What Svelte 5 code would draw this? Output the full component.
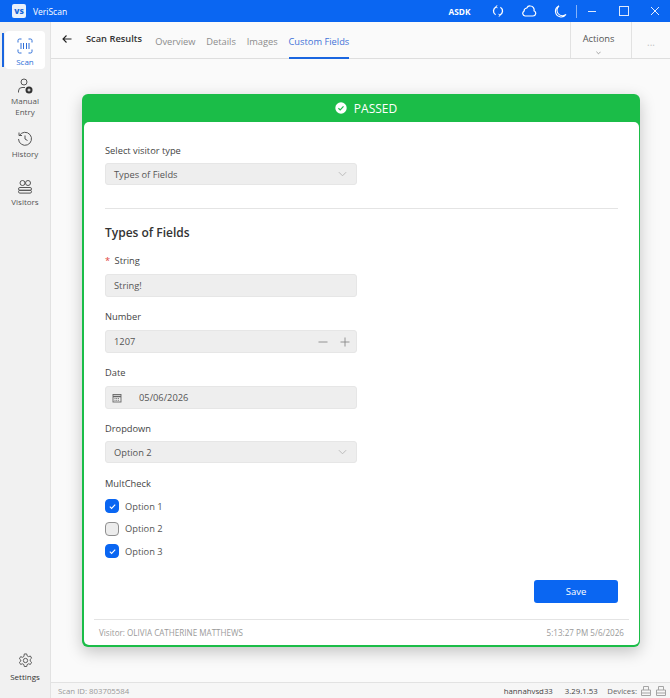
<script>
	const navItems = [
		{ id: 'scan', label: ['Scan'], active: true },
		{ id: 'manual', label: ['Manual', 'Entry'] },
		{ id: 'history', label: ['History'] },
		{ id: 'visitors', label: ['Visitors'] }
	];
	const tabs = ['Overview', 'Details', 'Images', 'Custom Fields'];
	const options = [
		{ label: 'Option 1', checked: true },
		{ label: 'Option 2', checked: false },
		{ label: 'Option 3', checked: true }
	];
</script>

{#snippet chevron()}
	<svg class="chevron" viewBox="0 0 10 6" width="9" height="6"><path d="M1 1l4 4 4-4" fill="none" stroke="#b5b5b5" stroke-width="1" /></svg>
{/snippet}

{#snippet printer()}
	<svg viewBox="0 0 12 12" width="12" height="12" fill="none" stroke="#a5a5a5" stroke-width="1"><path d="M3.5 5V1.5h5V5M1.5 5h9v5.5h-9zM1.5 8h9" /></svg>
{/snippet}

<div class="app">
	<header class="titlebar">
		<div class="logo">VS</div>
		<span class="appname">VeriScan</span>
		<span class="org">ASDK</span>
		<svg class="tb-icon sync" viewBox="0 0 14 14" width="14" height="14" fill="none" stroke="#fff" stroke-width="1.3"><path d="M5.300 2.800A4.500 4.500 0 0 0 4.600 10.800M8.700 11.200A4.500 4.500 0 0 0 9.400 3.200" /><path d="M6 1.300l-1 1.500 1.500 1M8 12.700l1-1.500-1.500-1" stroke-width="1" /></svg>
		<svg class="tb-icon cloud" viewBox="0 0 16 12" width="16" height="12" fill="none" stroke="#fff" stroke-width="1.2"><path d="M4 11h8a2.700 2.700 0 0 0 1-5.200A3.800 3.800 0 0 0 9.500 1 3.500 3.500 0 0 0 5.800 3 3.300 3.300 0 0 0 3 6.200 2.600 2.600 0 0 0 4 11z" /></svg>
		<svg class="tb-icon moon" viewBox="0 0 13 13" width="13" height="13" fill="none" stroke="#fff" stroke-width="1.1"><path d="M5 1a5.500 5.500 0 0 0 7 8.500A5.800 5.800 0 0 1 1.500 7 5.800 5.800 0 0 1 5 1z" /></svg>
		<span class="tb-sep"></span>
		<span class="win-min"></span>
		<span class="win-max"></span>
		<svg class="win-close" viewBox="0 0 10 10" width="10" height="10" stroke="#fff" stroke-width="0.9"><path d="M1 1l8 8M9 1l-8 8" /></svg>
	</header>

	<div class="body">
		<nav class="sidebar">
			<span class="active-mark"></span>
			{#each navItems as item}
				<div class="nav-item" class:active={item.active}>
					{#if item.id === 'scan'}
						<svg viewBox="0 0 16 16" width="16" height="16" fill="none" stroke="#2f6fd8" stroke-width="1"><path d="M1 4.500V2.500a1.500 1.500 0 0 1 1.500-1.500h2M11.500 1h2A1.500 1.500 0 0 1 15 2.500v2M15 11.500v2a1.500 1.500 0 0 1-1.500 1.500h-2M4.500 15h-2A1.500 1.500 0 0 1 1 13.500v-2M4 5v6M6.500 5v6M9.500 5v6M12 5v6" /></svg>
					{:else if item.id === 'manual'}
						<svg viewBox="0 0 16 16" width="16" height="16" fill="none" stroke="#555" stroke-width="1"><circle cx="7" cy="4" r="3" /><path d="M1.500 14.500v-1.500A3.500 3.500 0 0 1 5 9.500h3" /><circle cx="12" cy="12" r="3.500" fill="#333" stroke="none" /><path d="M10.500 12h3M12 10.500v3" stroke="#fff" /></svg>
					{:else if item.id === 'history'}
						<svg viewBox="0 0 16 16" width="16" height="16" fill="none" stroke="#555" stroke-width="1"><path d="M2.400 4.500A6.500 6.500 0 1 1 1.500 8M2 1.500v3h3M8 4.500V8l2.500 1.500" /></svg>
					{:else}
						<svg viewBox="0 0 16 16" width="16" height="16" fill="none" stroke="#555" stroke-width="1"><circle cx="5.500" cy="4" r="2.500" /><circle cx="11" cy="4" r="2.500" /><rect x="1.500" y="8.500" width="13" height="2.800" rx="1.400" /><rect x="1.500" y="11.300" width="13" height="2.800" rx="1.400" /></svg>
					{/if}
					<span class="nav-label">
						{#each item.label as line}<span>{line}</span>{/each}
					</span>
				</div>
			{/each}
			<div class="nav-item settings">
				<svg viewBox="0 0 16 16" width="15" height="15" fill="none" stroke="#555" stroke-width="1"><circle cx="8" cy="8" r="2.300" /><path d="M6.700 1h2.600l.4 2 1.600.9 1.900-.7 1.300 2.300-1.500 1.300v1.800l1.500 1.300-1.300 2.300-1.900-.7-1.600.9-.4 2H6.700l-.4-2-1.600-.9-1.900.7-1.300-2.300 1.500-1.300V7.500L1.500 6.200l1.300-2.300 1.900.7 1.600-.9z" /></svg>
				<span class="nav-label dark">Settings</span>
			</div>
		</nav>

		<div class="main">
			<div class="tabbar">
				<svg class="back" viewBox="0 0 10 10" width="10" height="10" fill="none" stroke="#222" stroke-width="1.1"><path d="M9.500 5H1M4.500 1.500L1 5l3.500 3.500" /></svg>
				<span class="page-title">Scan Results</span>
				<div class="tabs">
					{#each tabs as tab, i}
						<span class="tab" class:current={i === tabs.length - 1}>{tab}</span>
					{/each}
				</div>
				<div class="actions">
					<span>Actions</span>
					<svg viewBox="0 0 6 4" width="5" height="4" fill="none" stroke="#777" stroke-width="0.8"><path d="M.5.500L3 3 5.500.500" /></svg>
				</div>
				<div class="more">...</div>
			</div>

			<div class="content">
				<section class="card">
					<div class="banner">
						<svg viewBox="0 0 12 12" width="12" height="12"><circle cx="6" cy="6" r="5.700" fill="#fff" /><path d="M3.400 6.200l1.800 1.700 3.300-3.500" fill="none" stroke="#1bbd48" stroke-width="1.200" /></svg>
						<span>PASSED</span>
					</div>
					<div class="sheet">
						<div class="form-top">
							<label class="label first" for="vt">Select visitor type</label>
							<div class="control select" id="vt"><span>Types of Fields</span>{@render chevron()}</div>
						</div>
						<hr />
						<h2>Types of Fields</h2>

						<div class="label"><span class="req">*</span> String</div>
						<div class="control"><span>String!</span></div>

						<div class="label">Number</div>
						<div class="control">
							<span>1207</span>
							<span class="stepper">
								<svg viewBox="0 0 10 10" width="10" height="10" stroke="#888" stroke-width="0.9"><path d="M.5 5h9" /></svg>
								<svg viewBox="0 0 10 10" width="10" height="10" stroke="#888" stroke-width="0.9"><path d="M.5 5h9M5 .5v9" /></svg>
							</span>
						</div>

						<div class="label">Date</div>
						<div class="control date">
							<svg viewBox="0 0 10 10" width="10" height="10" fill="none" stroke="#666" stroke-width="0.9"><rect x="1" y="1.500" width="8" height="7.500" /><path d="M1 3.500h8" stroke-width="1.500" /><path d="M2.500 5.500h5M2.500 7.300h5" stroke-dasharray="1 .7" /></svg>
							<span>05/06/2026</span>
						</div>

						<div class="label tight">Dropdown</div>
						<div class="control select"><span>Option 2</span>{@render chevron()}</div>

						<div class="label wide">MultCheck</div>
						<div class="checks">
							{#each options as opt}
								<div class="check-row">
									<span class="box" class:on={opt.checked}>
										{#if opt.checked}
											<svg viewBox="0 0 10 10" width="9" height="9" fill="none" stroke="#fff" stroke-width="1.200"><path d="M2 5.200l2 2 4-4.400" /></svg>
										{/if}
									</span>
									<span>{opt.label}</span>
								</div>
							{/each}
						</div>

						<div class="save-row"><button>Save</button></div>

						<footer class="card-foot">
							<span>Visitor: OLIVIA CATHERINE MATTHEWS</span>
							<span>5:13:27 PM 5/6/2026</span>
						</footer>
					</div>
				</section>
			</div>

			<div class="status">
				<span class="scan-id">Scan ID: 803705584</span>
				<span class="user">hannahvsd33</span>
				<span class="ver">3.29.1.53</span>
				<span class="dev">Devices:</span>
				{@render printer()}
				{@render printer()}
			</div>
		</div>
	</div>
</div>

<style>
	:global(body) {
		margin: 0;
		background: #fafafa;
	}

	.app {
		width: 670px;
		height: 698px;
		display: flex;
		flex-direction: column;
		overflow: hidden;
		font-family: "Open Sans", "Noto Sans", sans-serif;
		font-size: 9.3px;
		color: #444;
	}

	.titlebar {
		height: 22px;
		flex: none;
		display: flex;
		align-items: center;
		background: #0a66f2;
		color: #fff;
		padding-left: 12px;
	}

	.logo {
		width: 14px;
		height: 14px;
		background: #e8f0fb;
		border-radius: 2px;
		color: #1a66d8;
		font-size: 7.5px;
		font-weight: 800;
		display: flex;
		align-items: center;
		justify-content: center;
	}

	.appname {
		margin-left: 7px;
		font-size: 8.5px;
	}

	.org {
		margin-left: auto;
		font-weight: 700;
		font-size: 8.3px;
	}

	.tb-icon {
		flex: none;
	}

	.sync { margin-left: 20px; }
	.cloud { margin-left: 16.5px; }
	.moon { margin-left: 17px; }

	.tb-sep {
		width: 1px;
		height: 13px;
		background: rgba(255, 255, 255, 0.5);
		margin-left: 8.5px;
	}

	.win-min {
		width: 8px;
		height: 1px;
		background: #dfe9fb;
		margin-left: 11.5px;
	}

	.win-max {
		width: 8px;
		height: 8px;
		border: 1px solid #dfe9fb;
		margin-left: 23px;
	}

	.win-close {
		margin-left: 21px;
		margin-right: 10px;
	}

	.body {
		flex: 1;
		display: flex;
		min-height: 0;
	}

	.sidebar {
		width: 51px;
		flex: none;
		position: relative;
		display: flex;
		flex-direction: column;
		align-items: center;
		background: #f1f1f1;
		border-right: 1px solid #e2e2e2;
		padding-top: 9px;
		box-sizing: border-box;
	}

	.active-mark {
		position: absolute;
		left: 2px;
		top: 11px;
		width: 1.5px;
		height: 34px;
		background: #1a66e0;
	}

	.nav-item {
		width: 40px;
		display: flex;
		flex-direction: column;
		align-items: center;
		padding: 8px 0 2px;
		gap: 1px;
		border-radius: 4px;
		margin-bottom: 4px;
	}

	.nav-item.active {
		background: #fff;
		height: 38px;
		padding: 7px 0 0;
		gap: 2px;
		box-sizing: border-box;
		margin-bottom: 1px;
	}

	.nav-item:nth-of-type(4) {
		margin-top: 6px;
	}

	.nav-label {
		display: flex;
		flex-direction: column;
		align-items: center;
		font-size: 8px;
		line-height: 11px;
		color: #555;
	}

	.active .nav-label {
		color: #2f6fd8;
	}

	.nav-label.dark {
		color: #333;
	}

	.settings {
		margin-top: auto;
		margin-bottom: 16px;
		padding: 0;
		gap: 3px;
	}

	.main {
		flex: 1;
		min-width: 0;
		display: flex;
		flex-direction: column;
	}

	.tabbar {
		height: 37px;
		flex: none;
		display: flex;
		align-items: stretch;
		background: #fafafa;
		border-bottom: 1px solid #dedede;
		box-shadow: 0 1px 2px rgba(0, 0, 0, 0.06);
		box-sizing: border-box;
	}

	.back {
		align-self: center;
		margin-left: 11px;
		margin-top: -3px;
	}

	.page-title {
		align-self: center;
		margin-left: 14px;
		margin-top: -3px;
		font-weight: 600;
		color: #333;
	}

	.tabs {
		display: flex;
		gap: 10.8px;
		margin-left: 13.2px;
	}

	.tab {
		display: flex;
		align-items: center;
		padding-top: 3px;
		color: #8c8c8c;
		border-bottom: 2px solid transparent;
		height: 37px;
		box-sizing: border-box;
	}

	.tab.current {
		color: #3f72d8;
		border-bottom-color: #1a66e0;
	}

	.actions {
		margin-left: auto;
		padding: 7px 5px 0 0;
		box-sizing: content-box;
		width: 55px;
		border-left: 1px solid #e2e2e2;
		border-right: 1px solid #e2e2e2;
		display: flex;
		flex-direction: column;
		align-items: center;
		justify-content: center;
		gap: 6px;
		color: #555;
	}

	.more {
		width: 38px;
		text-align: center;
		color: #c4c4c4;
		padding-top: 13px;
		box-sizing: border-box;
		font-size: 10px;
	}

	.content {
		flex: 1;
		min-height: 0;
		background: #fafafa;
		padding: 35px 30px 0 31px;
		box-sizing: border-box;
	}

	.card {
		width: 558px;
		height: 553px;
		display: flex;
		flex-direction: column;
		background: #1bbd48;
		border-radius: 6px;
		box-shadow: 0 5px 16px rgba(0, 0, 0, 0.22);
		padding: 0 1.5px 2px;
		box-sizing: border-box;
	}

	.banner {
		height: 28px;
		flex: none;
		display: flex;
		align-items: center;
		justify-content: center;
		gap: 7px;
		padding-left: 10px;
		color: #fff;
		font-size: 12px;
	}

	.sheet {
		flex: 1;
		min-height: 0;
		display: flex;
		flex-direction: column;
		background: #fff;
		border-radius: 5px;
		padding: 0 10px 0 21.5px;
	}

	.form-top {
		display: flex;
		flex-direction: column;
	}

	.label {
		line-height: 13px;
		color: #444;
		margin: 13px 0 7px 0;
	}

	.label.first {
		margin-top: 21.5px;
		margin-bottom: 6.5px;
	}

	.label.tight {
		margin-bottom: 6px;
	}

	.label.wide {
		margin-top: 14px;
	}

	.req {
		color: #e0443c;
		margin-right: 2px;
	}

	.control {
		width: 252px;
		height: 23px;
		flex: none;
		display: flex;
		align-items: center;
		justify-content: space-between;
		background: #eeeeee;
		border: 1px solid #e6e6e6;
		border-radius: 3px;
		padding: 0 8px;
		box-sizing: border-box;
		color: #555;
	}

	.control.select {
		height: 22px;
		padding-right: 9px;
	}

	.date {
		justify-content: flex-start;
		gap: 17px;
		padding-left: 6px;
	}

	.stepper {
		display: flex;
		gap: 12px;
		margin-right: -2px;
	}

	hr {
		width: 513px;
		border: 0;
		border-top: 1px solid #e4e4e4;
		margin: 23px 0 0;
	}

	h2 {
		font-size: 12px;
		font-weight: 600;
		line-height: 17px;
		color: #333;
		margin: 15px 0 0;
	}

	h2 + .label {
		margin-top: 13px;
	}

	.checks {
		display: flex;
		flex-direction: column;
		gap: 8.5px;
		margin-top: 2px;
	}

	.check-row {
		display: flex;
		align-items: center;
		gap: 6px;
		height: 14px;
		color: #555;
	}

	.box {
		width: 14px;
		height: 14px;
		box-sizing: border-box;
		border-radius: 4px;
		border: 1px solid #8f8f8f;
		background: #ececec;
		display: flex;
		align-items: center;
		justify-content: center;
	}

	.box.on {
		background: #0a66f2;
		border-color: #0a66f2;
	}

	.save-row {
		display: flex;
		justify-content: flex-end;
		width: 513px;
		margin-top: 22px;
	}

	button {
		width: 84px;
		height: 23px;
		border: 0;
		border-radius: 3px;
		background: #0a66f2;
		color: #fff;
		font: inherit;
		font-size: 9.5px;
		font-weight: 500;
	}

	.card-foot {
		display: flex;
		justify-content: space-between;
		margin: 16px 0 0 -11px;
		width: 535px;
		box-sizing: border-box;
		border-top: 1px solid #e4e4e4;
		padding: 7px 5px 0;
		font-size: 8.1px;
		color: #9a9a9a;
	}

	.status {
		height: 16px;
		flex: none;
		display: flex;
		align-items: center;
		gap: 3px;
		background: #f6f6f6;
		border-top: 1px solid #e2e2e2;
		padding: 0 3px 0 7px;
		box-sizing: border-box;
		font-size: 7.8px;
		color: #444;
	}

	.scan-id {
		color: #999;
		margin-right: auto;
	}

	.ver {
		margin-left: 9px;
	}

	.dev {
		margin-left: 6.5px;
		color: #666;
	}
</style>
